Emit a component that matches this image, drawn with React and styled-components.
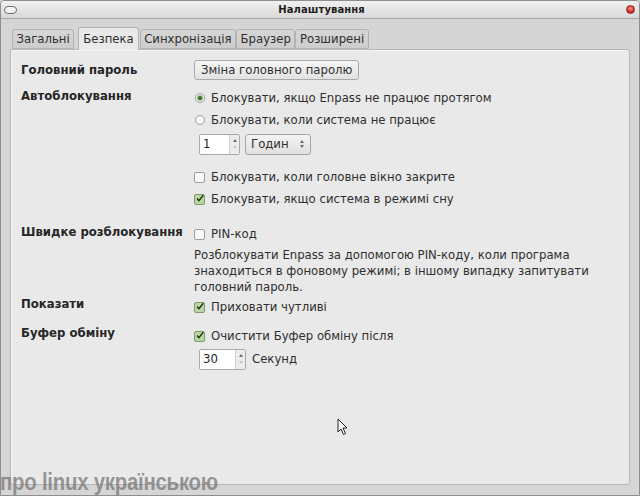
import React from 'react';
import styled, { createGlobalStyle } from 'styled-components';

const GlobalStyle = createGlobalStyle`
  html, body {
    margin: 0;
    padding: 0;
    background: #d4d4d4;
  }
  body {
    font-family: 'DejaVu Sans', 'Noto Sans', sans-serif;
    font-size: 11.7px;
    color: #2f2f2f;
  }
`;

const Window = styled.div`
  position: relative;
  width: 640px;
  height: 496px;
  box-sizing: border-box;
  display: flex;
  flex-direction: column;
  background: #d5d5d5;
  border: 1px solid #8e8e8e;
  border-radius: 4px 4px 0 0;
  overflow: hidden;
`;

const TitleBar = styled.div`
  height: 17px;
  flex: none;
  display: flex;
  align-items: center;
  justify-content: space-between;
  padding: 0 4px 0 3px;
  background: linear-gradient(#f0f0f0, #d9d9d9);
  border-bottom: 1px solid #a6a6a6;
`;

const Title = styled.div`
  font-weight: bold;
  font-size: 10px;
  color: #1e1e1e;
  letter-spacing: 0.1px;
`;

const MenuPill = styled.div`
  width: 11px;
  height: 6px;
  border: 1px solid #6e6e6e;
  border-radius: 4px;
  background: #f4f4f4;
`;

const CloseDot = styled.div`
  width: 9px;
  height: 9px;
  border-radius: 50%;
  background: radial-gradient(circle at 50% 35%, #ff9a94 0%, #e0322b 55%, #8d1410 100%);
  border: 1px solid #8a2a26;
  box-sizing: border-box;
`;

const Body = styled.div`
  flex: 1;
  display: flex;
  flex-direction: column;
  padding: 8px 9px 10px 9px;
`;

const TabBar = styled.div`
  display: flex;
  align-items: flex-end;
  padding-left: 2px;
  height: 22px;
  position: relative;
  z-index: 1;
`;

const Tab = styled.div`
  height: ${p => (p.active ? '23px' : '20px')};
  box-sizing: border-box;
  padding: 0 ${p => (p.active ? '4px' : '3.5px')};
  margin: ${p => (p.active ? '0 1px 0 4px' : '0')};
  display: flex;
  align-items: center;
  color: #2f2f2f;
  border: 1px solid #b3b3b3;
  border-bottom: ${p => (p.active ? 'none' : '1px solid #b3b3b3')};
  border-radius: 3px 3px 0 0;
  background: ${p => (p.active ? '#e9e9e9' : 'linear-gradient(#d6d6d6, #cdcdcd)')};
  margin-bottom: ${p => (p.active ? '-1px' : '0')};
  padding-bottom: ${p => (p.active ? '1px' : '0')};
`;

const Panel = styled.div`
  flex: 1;
  background: #e9e9e9;
  border: 1px solid #b7b7b7;
  border-radius: 0 3px 3px 3px;
  padding: 10px 9px 0 10px;
  box-shadow: 1px 1px 0 #f4f4f4 inset;
`;

const Section = styled.div`
  display: grid;
  grid-template-columns: 173px 1fr;
  margin-top: ${p => p.gap || 0}px;
`;

const Label = styled.div`
  font-weight: bold;
  line-height: 18px;
  color: #262626;
  margin-top: ${p => p.shift || 0}px;
`;

const Controls = styled.div`
  display: flex;
  flex-direction: column;
`;

const Row = styled.div`
  display: flex;
  align-items: center;
  height: ${p => p.h || 22}px;
  gap: ${p => p.gap || 6}px;
  margin-top: ${p => p.mt || 0}px;
  padding-left: ${p => p.pl || 0}px;
`;

const PushButton = styled.div`
  height: 20px;
  box-sizing: border-box;
  padding: 0 6px;
  display: flex;
  align-items: center;
  border: 1px solid #a9a9a9;
  border-radius: 3px;
  background: linear-gradient(#f5f5f5, #e2e2e2);
  color: #2f2f2f;
`;

const Radio = styled.span`
  width: 10px;
  height: 10px;
  box-sizing: border-box;
  border-radius: 50%;
  border: 1px solid #9a9a9a;
  background: #fbfbfb;
  display: flex;
  align-items: center;
  justify-content: center;
  margin-left: 1px;
  &::after {
    content: '';
    display: ${p => (p.checked ? 'block' : 'none')};
    width: 4px;
    height: 4px;
    border-radius: 50%;
    background: #3f6b2a;
    box-shadow: 0 0 0 1px #9cc487;
  }
`;

const Box = styled.span`
  width: 11px;
  height: 11px;
  box-sizing: border-box;
  border: 1px solid ${p => (p.checked ? '#7f9a6c' : '#9d9d9d')};
  border-radius: 2px;
  background: ${p => (p.checked ? '#b9d7a3' : '#fafafa')};
  display: flex;
  align-items: center;
  justify-content: center;
  flex: none;
`;

const Check = ({ checked }) => (
  <Box checked={checked}>
    {checked && (
      <svg width="11" height="11" viewBox="0 0 11 11" style={{ marginTop: -2, marginLeft: 1 }}>
        <path d="M1.5 5.5 L4 8.5 L10 1" fill="none" stroke="#1d2b14" strokeWidth="1.8" />
      </svg>
    )}
  </Box>
);

const SpinWrap = styled.div`
  display: flex;
  height: 21px;
  box-sizing: border-box;
  width: ${p => p.w}px;
  border: 1px solid #a8a8a8;
  border-radius: 2px;
  background: #fff;
`;

const SpinText = styled.div`
  flex: 1;
  padding-left: 3px;
  display: flex;
  align-items: center;
  color: #1f1f1f;
`;

const SpinArrows = styled.div`
  width: 9px;
  background: #ececec;
  border-left: 1px solid #cfcfcf;
  display: flex;
  flex-direction: column;
  align-items: center;
  justify-content: space-around;
  padding: 2px 0;
`;

const Arrow = styled.span`
  width: 0;
  height: 0;
  border-left: 2px solid transparent;
  border-right: 2px solid transparent;
  ${p => (p.up ? 'border-bottom' : 'border-top')}: 3px solid ${p => (p.dim ? '#c4c4c4' : '#6a6a6a')};
`;

const Spin = ({ value, w }) => (
  <SpinWrap w={w}>
    <SpinText>{value}</SpinText>
    <SpinArrows>
      <Arrow up />
      <Arrow dim />
    </SpinArrows>
  </SpinWrap>
);

const Combo = styled.div`
  height: 21px;
  width: 66px;
  box-sizing: border-box;
  border: 1px solid #a6a6a6;
  border-radius: 3px;
  background: linear-gradient(#f4f4f4, #e0e0e0);
  display: flex;
  align-items: center;
  justify-content: space-between;
  padding: 0 6px 0 5px;
`;

const ComboArrows = styled.div`
  display: flex;
  flex-direction: column;
  gap: 2px;
`;

const Desc = styled.div`
  line-height: 16px;
  padding-top: 2px;
  width: 420px;
  color: #2f2f2f;
`;

const Watermark = styled.div`
  position: absolute;
  left: -1px;
  bottom: 1px;
  font-family: 'Liberation Sans', sans-serif;
  font-weight: bold;
  font-size: 24px;
  color: rgba(120, 120, 120, 0.75);
  letter-spacing: -0.3px;
  line-height: 24px;
  transform: scaleX(0.85);
  transform-origin: left center;
  white-space: nowrap;
`;

const Cursor = styled.svg`
  position: absolute;
  left: 336px;
  top: 417px;
`;

export default function App() {
  return (
    <>
      <GlobalStyle />
      <Window>
        <TitleBar>
          <MenuPill />
          <Title>Налаштування</Title>
          <CloseDot />
        </TitleBar>
        <Body>
          <TabBar>
            <Tab>Загальні</Tab>
            <Tab active>Безпека</Tab>
            <Tab>Синхронізація</Tab>
            <Tab>Браузер</Tab>
            <Tab>Розширені</Tab>
          </TabBar>
          <Panel>
            <Section>
              <Label shift={1}>Головний пароль</Label>
              <Controls>
                <Row h={20}>
                  <PushButton>Зміна головного паролю</PushButton>
                </Row>
              </Controls>
            </Section>

            <Section gap={7}>
              <Label>Автоблокування</Label>
              <Controls>
                <Row>
                  <Radio checked />
                  <span>Блокувати, якщо Enpass не працює протягом</span>
                </Row>
                <Row>
                  <Radio />
                  <span>Блокувати, коли система не працює</span>
                </Row>
                <Row pl={5} gap={5} h={24} mt={1}>
                  <Spin value="1" w={41} />
                  <Combo>
                    <span>Годин</span>
                    <ComboArrows>
                      <Arrow up />
                      <Arrow />
                    </ComboArrows>
                  </Combo>
                </Row>
                <Row mt={10}>
                  <Check />
                  <span>Блокувати, коли головне вікно закрите</span>
                </Row>
                <Row>
                  <Check checked />
                  <span>Блокувати, якщо система в режимі сну</span>
                </Row>
              </Controls>
            </Section>

            <Section gap={13}>
              <Label>Швидке розблокування</Label>
              <Controls>
                <Row>
                  <Check />
                  <span>PIN-код</span>
                </Row>
                <Desc>
                  Розблокувати Enpass за допомогою PIN-коду, коли програма знаходиться в фоновому
                  режимі; в іншому випадку запитувати головний пароль.
                </Desc>
              </Controls>
            </Section>

            <Section gap={1}>
              <Label shift={-1}>Показати</Label>
              <Controls>
                <Row>
                  <Check checked />
                  <span>Приховати чутливі</span>
                </Row>
              </Controls>
            </Section>

            <Section gap={7}>
              <Label shift={-1}>Буфер обміну</Label>
              <Controls>
                <Row>
                  <Check checked />
                  <span>Очистити Буфер обміну після</span>
                </Row>
                <Row pl={5} gap={6} h={24}>
                  <Spin value="30" w={47} />
                  <span>Секунд</span>
                </Row>
              </Controls>
            </Section>
          </Panel>
        </Body>
        <Cursor width="12" height="18" viewBox="0 0 12 18">
          <path d="M1 1 L1 14 L4 11 L6.5 16.5 L8.5 15.5 L6 10 L10 10 Z" fill="#fff" stroke="#222" strokeWidth="1" />
        </Cursor>
        <Watermark>про linux українською</Watermark>
      </Window>
    </>
  );
}
